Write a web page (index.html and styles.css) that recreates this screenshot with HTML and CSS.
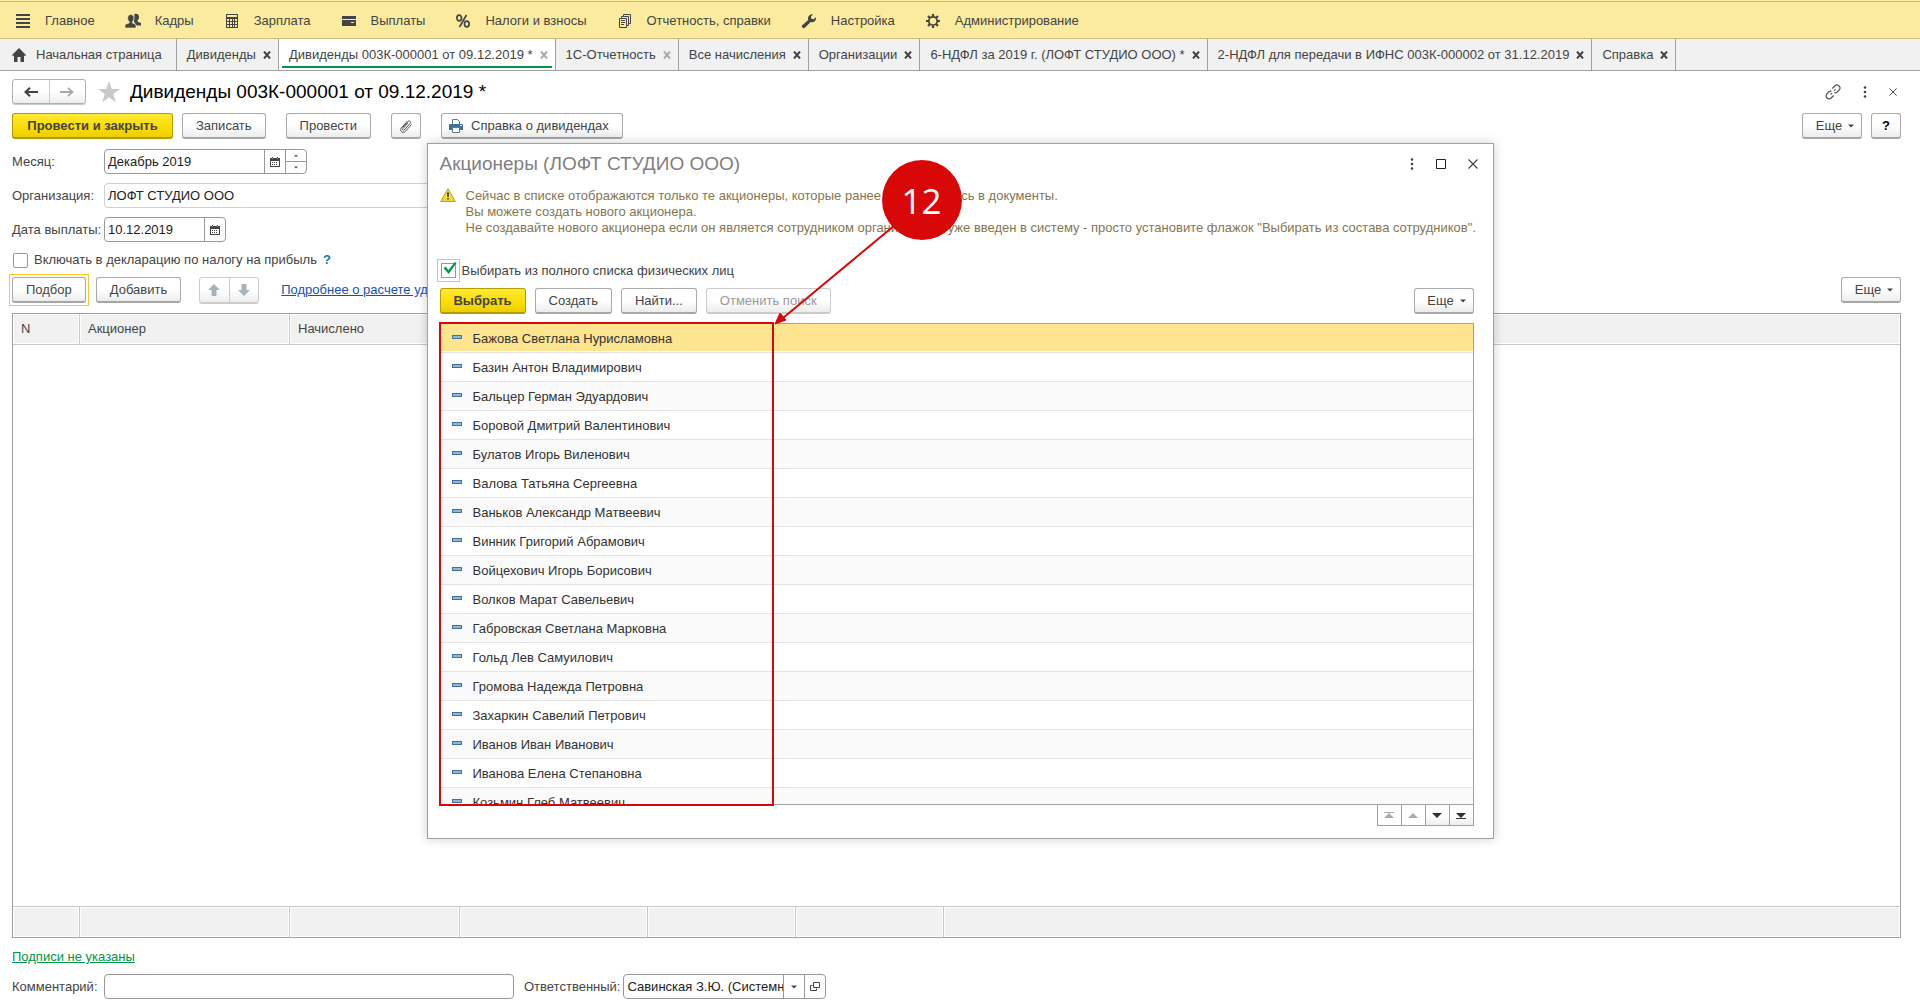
FILE: index.html
```html
<!DOCTYPE html>
<html lang="ru">
<head>
<meta charset="utf-8">
<meta name="viewport" content="width=device-width, initial-scale=1">
<title>Дивиденды 003К-000001 от 09.12.2019 *</title>
<link rel="stylesheet" href="styles.css">
</head>
<body>
<svg class="defs" aria-hidden="true">
  <symbol id="i-close" viewBox="0 0 8 8"><path d="M1 .5l6 7M7 .5l-6 7" fill="none" stroke="currentColor" stroke-width="2"/></symbol>
  <symbol id="i-thin" viewBox="0 0 10 10"><path d="M.5.5l9 9M9.500 .5l-9 9" fill="none" stroke="currentColor" stroke-width="1.200"/></symbol>
  <symbol id="i-dots" viewBox="0 0 4 12"><circle cx="2" cy="1.500" r="1.300" fill="currentColor"/><circle cx="2" cy="6" r="1.300" fill="currentColor"/><circle cx="2" cy="10.500" r="1.300" fill="currentColor"/></symbol>
  <symbol id="i-down" viewBox="0 0 6 4"><path d="M0 .5h6l-3 3z" fill="currentColor"/></symbol>
  <symbol id="i-up" viewBox="0 0 6 4"><path d="M0 3.500h6l-3-3z" fill="currentColor"/></symbol>
  <symbol id="i-cal" viewBox="0 0 10 10"><path d="M0 1h10v9H0z" fill="#444"/><path d="M1 4h8v5H1z" fill="#fff"/><path d="M2 0h1v2H2zM7 0h1v2H7z" fill="#444"/><path d="M2 1h1v1H2zM7 1h1v1H7z" fill="#999"/><path d="M2 5h1v1H2zM4 5h1v1H4zM6 5h1v1H6zM2 7h1v1H2zM4 7h1v1H4zM6 7h1v1H6z" fill="#444"/></symbol>
</svg>

<nav class="menu" aria-label="Разделы">
  <a href="#"><svg class="ico" viewBox="0 0 16 16"><path d="M1 2h14M1 6h14M1 10h14M1 14h14" stroke="#444" stroke-width="2"/></svg>Главное</a>
  <a href="#"><svg class="ico" viewBox="0 0 16 16"><path d="M9.500 1c2-.9 4.500.2 4.500 2.800 0 1.600-.6 2.900-1.400 3.600v1.300L16 10v2.500h-4.500L9 9z" fill="#444"/><path d="M2.700 5C2.700 2.800 4 1.500 5.800 1.500S9 2.800 9 5c0 1.700-.7 3-1.600 3.700v1.200l3.600 1.600v3.500H0v-3.500l4.200-1.600V8.700C3.300 8 2.700 6.700 2.700 5z" fill="#444" stroke="#fbeb9e" stroke-width=".7"/></svg>Кадры</a>
  <a href="#"><svg class="ico" viewBox="0 0 16 16"><path d="M2 1h12v14H2z" fill="#444"/><path d="M3 2h10v2H3zM3 6h2v2H3zM6 6h2v2H6zM9 6h1v2H9zM11 6h2v2h-2zM3 9h2v2H3zM6 9h2v2H6zM9 9h1v2H9zM11 9h2v2h-2zM3 12h2v2H3zM6 12h2v2H6zM9 12h1v2H9zM11 12h2v2h-2z" fill="#fbeb9e"/></svg>Зарплата</a>
  <a href="#"><svg class="ico" viewBox="0 0 16 16"><path d="M1 3h14v3H1zM1 7h14v6H1z" fill="#444"/><path d="M10 9h3v1h-3z" fill="#fbeb9e"/></svg>Выплаты</a>
  <a href="#"><svg class="ico" viewBox="0 0 16 16"><g fill="none" stroke="#444" stroke-width="1.700"><ellipse cx="4.200" cy="5" rx="2.300" ry="2.900"/><ellipse cx="11.800" cy="11" rx="2.300" ry="2.900"/><path d="M11.500 2L4.500 14"/></g></svg>Налоги и взносы</a>
  <a href="#"><svg class="ico" viewBox="0 0 16 16"><path d="M2.500 5.500h7v9h-7zM4.500 5V3.500h7v9H10M6.500 3V1.500h7v9H12" fill="none" stroke="#444"/><path d="M4 7.500h4M4 9.500h4M4 11.500h3" stroke="#444"/></svg>Отчетность, справки</a>
  <a href="#"><svg class="ico" viewBox="0 0 16 16"><path d="M1 12.600L7.200 7C6.400 4 8.300 1.200 12 1.300L9.900 3.800l.5 1.900 2 .6L15 4.200c.5 3.300-2 5.600-5.300 4.900L3.600 15c-1.600.8-3.400-.9-2.600-2.400z" fill="#444"/></svg>Настройка</a>
  <a href="#"><svg class="ico" viewBox="0 0 16 16"><circle cx="8" cy="8" r="4.200" fill="none" stroke="#444" stroke-width="1.800"/><path d="M8 1v2.500M8 12.500V15M1 8h2.500M12.500 8H15M3 3l2 2M11 11l2 2M13 3l-2 2M5 11l-2 2" stroke="#444" stroke-width="2.200"/></svg>Администрирование</a>
</nav>

<div class="tabs">
  <div class="tab home"><svg class="house" viewBox="0 0 14 14"><path d="M7 0l7 7-1 1.200L12 7.300V14H8.500V9h-3v5H2V7.300L1 8.200 0 7z" fill="#444"/></svg><a href="#">Начальная страница</a></div>
  <div class="tab"><a href="#">Дивиденды</a><button class="x" aria-label="Закрыть"><svg><use href="#i-close"/></svg></button></div>
  <div class="tab active"><a href="#">Дивиденды 003К-000001 от 09.12.2019 *</a><button class="x dim" aria-label="Закрыть"><svg><use href="#i-close"/></svg></button></div>
  <div class="tab"><a href="#">1С-Отчетность</a><button class="x dim" aria-label="Закрыть"><svg><use href="#i-close"/></svg></button></div>
  <div class="tab"><a href="#">Все начисления</a><button class="x" aria-label="Закрыть"><svg><use href="#i-close"/></svg></button></div>
  <div class="tab"><a href="#">Организации</a><button class="x" aria-label="Закрыть"><svg><use href="#i-close"/></svg></button></div>
  <div class="tab"><a href="#">6-НДФЛ за 2019 г. (ЛОФТ СТУДИО ООО) *</a><button class="x" aria-label="Закрыть"><svg><use href="#i-close"/></svg></button></div>
  <div class="tab"><a href="#">2-НДФЛ для передачи в ИФНС 003К-000002 от 31.12.2019</a><button class="x" aria-label="Закрыть"><svg><use href="#i-close"/></svg></button></div>
  <div class="tab"><a href="#">Справка</a><button class="x" aria-label="Закрыть"><svg><use href="#i-close"/></svg></button></div>
</div>

<main>
  <header class="titlebar">
    <div class="pair nav">
      <button aria-label="Назад"><svg width="14" height="10" viewBox="0 0 14 10"><path d="M14 5H2M6 .8L1.500 5 6 9.200" fill="none" stroke="#444" stroke-width="2.200"/></svg></button>
      <button aria-label="Вперед"><svg width="14" height="10" viewBox="0 0 14 10"><path d="M0 5h12M8 .8L12.500 5 8 9.200" fill="none" stroke="#aaa" stroke-width="1.800"/></svg></button>
    </div>
    <svg class="star" viewBox="0 0 22 22"><path d="M11 0l2.700 8H22l-6.700 5 2.600 8.500L11 16.300 4.100 21.500 6.700 13 0 8h8.300z" fill="#c8cacc"/></svg>
    <h1>Дивиденды 003К-000001 от 09.12.2019 *</h1>
    <div class="wintools">
      <button class="bare" aria-label="Ссылка"><svg width="16" height="16" viewBox="0 0 16 16"><g transform="rotate(-45 8 8)" fill="none" stroke="#555" stroke-width="1.200"><path d="M6 11H2.500a3 3 0 0 1 0-6H5a3 3 0 0 1 2.500 1.500"/><path d="M10 5h3.500a3 3 0 0 1 0 6H11a3 3 0 0 1-2.500-1.500"/><path d="M4.500 8h2M9.500 8h2"/></g></svg></button>
      <button class="bare" aria-label="Меню"><svg width="4" height="12"><use href="#i-dots"/></svg></button>
      <button class="bare" aria-label="Закрыть"><svg width="8" height="8"><use href="#i-thin"/></svg></button>
    </div>
  </header>

  <div class="toolbar">
    <button class="btn primary w161">Провести и закрыть</button>
    <button class="btn">Записать</button>
    <button class="btn apart">Провести</button>
    <button class="btn square apart" aria-label="Файлы"><svg width="14" height="16" viewBox="0 0 14 16"><path d="M3.500 9.500l5.500-6c1.500-1.500 3.500.3 2.200 1.900l-6 6.600c-.9.9-2.200-.2-1.400-1.200L9 5M12.500 6.500l-6 6.800c-2.600 2.800-6.500-.4-4.200-3.300l5.900-6.800" fill="none" stroke="#555" stroke-width="1"/></svg></button>
    <button class="btn print apart"><svg width="14" height="14" viewBox="0 0 14 14"><path d="M3.500.5h5l2 2V6h-7z" fill="#fff" stroke="#5b7c99"/><path d="M1 5h12a1 1 0 0 1 1 1v5H0V6a1 1 0 0 1 1-1z" fill="#3f6e9a"/><path d="M3.500 8.500h7v5h-7z" fill="#fff" stroke="#5b7c99"/><path d="M11 6h2v1h-2z" fill="#fff"/></svg>Справка о дивидендах</button>
    <button class="btn more push">Еще <svg width="6" height="4"><use href="#i-down"/></svg></button>
    <button class="btn square help">?</button>
  </div>

  <form class="form" onsubmit="return false">
    <label for="month">Месяц:</label>
    <div class="field month"><input id="month" type="text" value="Декабрь 2019"><button aria-label="Календарь"><svg width="10" height="10"><use href="#i-cal"/></svg></button><div class="spin"><button aria-label="Больше"><svg width="4" height="3"><use href="#i-up"/></svg></button><button aria-label="Меньше"><svg width="4" height="3"><use href="#i-down"/></svg></button></div></div>
    <label for="org">Организация:</label>
    <div class="field pale org"><input id="org" type="text" value="ЛОФТ СТУДИО ООО"></div>
    <label for="date">Дата выплаты:</label>
    <div class="field date"><input id="date" type="text" value="10.12.2019"><button aria-label="Календарь"><svg width="10" height="10"><use href="#i-cal"/></svg></button></div>
  </form>
  <div class="check"><input type="checkbox" id="incl"><label for="incl">Включать в декларацию по налогу на прибыль</label><a class="hint" href="#">?</a></div>

  <div class="toolbar second">
    <button class="btn focus">Подбор</button>
    <button class="btn">Добавить</button>
    <div class="pair moves apart">
      <button aria-label="Вверх" disabled><svg width="12" height="12" viewBox="0 0 12 12"><path d="M6 0l6 6H8.500v6h-5V6H0z" fill="#a9b4ba"/></svg></button>
      <button aria-label="Вниз" disabled><svg width="12" height="12" viewBox="0 0 12 12"><path d="M6 12L0 6h3.500V0h5v6H12z" fill="#a9b4ba"/></svg></button>
    </div>
    <a class="info" href="#">Подробнее о расчете удержаний</a>
    <button class="btn more push">Еще <svg width="6" height="4"><use href="#i-down"/></svg></button>
  </div>

  <div class="grid">
    <table>
      <colgroup><col class="c1"><col class="c2"><col class="c3"><col class="c4"><col class="c5"><col class="c5"><col></colgroup>
      <thead><tr><th>N</th><th>Акционер</th><th>Начислено</th><th class="open" colspan="4"></th></tr></thead>
      <tbody><tr><td colspan="7"></td></tr></tbody>
      <tfoot><tr><td></td><td></td><td></td><td></td><td></td><td></td><td class="open"></td></tr></tfoot>
    </table>
  </div>

  <a class="sign" href="#">Подписи не указаны</a>
  <div class="bottom">
    <label class="key" for="note">Комментарий:</label>
    <div class="field note"><input id="note" type="text"></div>
    <label for="resp">Ответственный:</label>
    <div class="field resp"><input id="resp" type="text" value="Савинская З.Ю. (Системный программист)"><button aria-label="Выбрать"><svg width="6" height="4"><use href="#i-down"/></svg></button><button aria-label="Открыть"><svg width="10" height="10" viewBox="0 0 10 10"><path d="M3.500.5h6v5h-6zM2.500 3.500h-2v5h6v-2" fill="none" stroke="#444"/></svg></button></div>
  </div>
</main>

<div class="overlay">
  <section class="dialog" role="dialog" aria-labelledby="dt">
    <header class="dhead">
      <h2 id="dt">Акционеры (ЛОФТ СТУДИО ООО)</h2>
      <div class="dtools">
        <button class="bare" aria-label="Меню"><svg width="4" height="12"><use href="#i-dots"/></svg></button>
        <button class="bare" aria-label="Развернуть"><svg width="10" height="10" viewBox="0 0 10 10"><path d="M.5.500h9v9h-9z" fill="none" stroke="#222" stroke-width="1"/></svg></button>
        <button class="bare" aria-label="Закрыть"><svg width="10" height="10"><use href="#i-thin"/></svg></button>
      </div>
    </header>
    <div class="warn">
      <svg width="16" height="14" viewBox="0 0 16 14"><path d="M8 .7L15.300 13.400H.7z" fill="#f7d93c" stroke="#b59b35" stroke-linejoin="round"/><path d="M7 4.500h2l-.4 4.500H7.400zM7.200 10h1.600v1.600H7.200z" fill="#333"/></svg>
      <p>Сейчас в списке отображаются только те акционеры, которые ранее уже вводились в документы.<br>Вы можете создать нового акционера.<br>Не создавайте нового акционера если он является сотрудником организации и уже введен в систему - просто установите флажок "Выбирать из состава сотрудников".</p>
    </div>
    <div class="dcheck"><input type="checkbox" id="full" checked><label for="full">Выбирать из полного списка физических лиц</label></div>
    <div class="toolbar">
      <button class="btn primary w86">Выбрать</button>
      <button class="btn">Создать</button>
      <button class="btn">Найти...</button>
      <button class="btn" disabled>Отменить поиск</button>
      <button class="btn more push">Еще <svg width="6" height="4"><use href="#i-down"/></svg></button>
    </div>
    <div class="listbox">
      <div class="list">
        <table>
          <tbody>
            <tr class="sel"><td><i></i>Бажова Светлана Нурисламовна</td><td></td></tr>
            <tr><td><i></i>Базин Антон Владимирович</td><td></td></tr>
            <tr><td><i></i>Бальцер Герман Эдуардович</td><td></td></tr>
            <tr><td><i></i>Боровой Дмитрий Валентинович</td><td></td></tr>
            <tr><td><i></i>Булатов Игорь Виленович</td><td></td></tr>
            <tr><td><i></i>Валова Татьяна Сергеевна</td><td></td></tr>
            <tr><td><i></i>Ваньков Александр Матвеевич</td><td></td></tr>
            <tr><td><i></i>Винник Григорий Абрамович</td><td></td></tr>
            <tr><td><i></i>Войцехович Игорь Борисович</td><td></td></tr>
            <tr><td><i></i>Волков Марат Савельевич</td><td></td></tr>
            <tr><td><i></i>Габровская Светлана Марковна</td><td></td></tr>
            <tr><td><i></i>Гольд Лев Самуилович</td><td></td></tr>
            <tr><td><i></i>Громова Надежда Петровна</td><td></td></tr>
            <tr><td><i></i>Захаркин Савелий Петрович</td><td></td></tr>
            <tr><td><i></i>Иванов Иван Иванович</td><td></td></tr>
            <tr><td><i></i>Иванова Елена Степановна</td><td></td></tr>
            <tr><td><i></i>Козьмин Глеб Матвеевич</td><td></td></tr>
          </tbody>
        </table>
      </div>
      <div class="frame"></div>
    </div>
    <div class="pager">
      <button disabled aria-label="В начало"><svg width="10" height="7" viewBox="0 0 10 7"><path d="M0 0h10v1H0zM5 1l5 5H0z" fill="#aaa"/></svg></button>
      <button disabled aria-label="Назад"><svg width="10" height="7" viewBox="0 0 10 7"><path d="M5 1l5 5H0z" fill="#aaa"/></svg></button>
      <button aria-label="Вперед"><svg width="10" height="7" viewBox="0 0 10 7"><path d="M5 6L0 1h10z" fill="#333"/></svg></button>
      <button aria-label="В конец"><svg width="10" height="7" viewBox="0 0 10 7"><path d="M0 6h10v1H0zM5 6L0 1h10z" fill="#333"/></svg></button>
    </div>
    <svg class="arrow" viewBox="0 0 124 102"><path d="M120 2L8 95" stroke="#d80808" stroke-width="2"/><path d="M0 101l5-11 6 7z" fill="#d80808" stroke="#d80808" stroke-width="1"/></svg>
    <div class="badge">12</div>
  </section>
</div>
</body>
</html>
```
FILE: styles.css
```css
* { box-sizing: border-box; }

body {
  margin: 0;
  height: 100vh;
  min-height: 760px;
  display: flex;
  flex-direction: column;
  position: relative;
  background: #fff;
  color: #444;
  font: 13px/16px "Liberation Sans", Arial, sans-serif;
}

button, input { font: inherit; color: inherit; margin: 0; }
button { padding: 0; display: flex; align-items: center; justify-content: center; flex: none; }
svg { flex: none; display: block; }
a { color: inherit; text-decoration: none; }
h1, h2, p { margin: 0; font-weight: normal; }
.defs { position: absolute; width: 0; height: 0; }
.bare { border: 0; background: none; color: #444; }

/* Sections menu */
.menu {
  display: flex;
  gap: 30px;
  height: 39px;
  flex: none;
  padding: 0 15px;
  background: #fbeb9e;
  border-bottom: 1px solid #cbbd73;
  box-shadow: inset 0 1px #fbeb9e, inset 0 2px #cbbd73;
}
.menu a { display: flex; align-items: center; gap: 14px; padding-top: 3px; white-space: nowrap; }
.ico { width: 16px; height: 16px; }

/* Open windows */
.tabs { display: flex; height: 32px; flex: none; background: #f1f1f1; border-bottom: 1px solid #a0a0a0; }
.tab {
  display: flex;
  align-items: center;
  gap: 7px;
  padding: 0 7px 0 10px;
  border-right: 1px solid #a0a0a0;
  white-space: nowrap;
}
.tab.home { padding: 0 14px 0 12px; gap: 10px; }
.tab.active { background: linear-gradient(#009646, #009646) center bottom 2px / calc(100% - 6px) 2px no-repeat #fff; }
.house { width: 14px; height: 14px; }
.x { width: 8px; height: 8px; border: 0; background: none; color: #444; }
.x svg { width: 8px; height: 8px; }
.x.dim { color: #aaa; }

/* Document */
main { flex: 1; min-height: 0; display: flex; flex-direction: column; padding: 8px 19px 3px 12px; }
.titlebar { display: flex; align-items: center; height: 25px; flex: none; }
.star { width: 22px; height: 22px; margin: 0 10px 0 12px; }
h1 { font-size: 19px; line-height: 24px; color: #000; }
.wintools { margin-left: auto; display: flex; align-items: center; gap: 22px; padding-right: 4px; }

.pair { display: flex; height: 25px; border: 1px solid #b0b0b0; border-radius: 3px; box-shadow: 0 1px #ccc; background: linear-gradient(#fff 50%, #ededed); }
.pair button { flex: 1; border: 0; background: none; }
.pair button + button { border-left: 1px solid #ccc; }
.nav { width: 74px; }
.moves { width: 60px; height: 26px; border-color: #ccc; }

.toolbar { display: flex; gap: 9px; height: 26px; flex: none; margin-top: 9px; }
.btn {
  height: 26px;
  padding: 1px 13px 0;
  border: 1px solid #aaa;
  border-bottom: 2px solid #a6a6a6;
  border-radius: 3px;
  background: linear-gradient(#fff 50%, #ececec);
  white-space: nowrap;
}
.btn.primary { font-weight: bold; border-color: #b39d00; background: linear-gradient(#ffe936, #fbdc00 60%, #ecce00); }
.btn:disabled { color: #999; border-color: #ccc; }
.w161 { width: 161px; }
.w86 { width: 86px; }
.btn.square { width: 30px; padding: 0; }
.btn.help { font-weight: bold; color: #000; }
.btn.print { gap: 8px; padding: 1px 13px 0 7px; }
.btn.more { width: 60px; padding: 1px 6px 0 12px; gap: 6px; }
.apart { margin-left: 11px; }
.toolbar .push { margin-left: auto; }
.focus { position: relative; }
.focus::after { content: ""; position: absolute; inset: -4px -4px -5px; border: 1px solid #f7c92f; }

.form { display: grid; grid-template-columns: 92px 1fr; row-gap: 9px; align-items: center; margin: 10px 0 0; flex: none; }
.field { display: flex; height: 25px; border: 1px solid #999; border-radius: 4px; background: #fff; overflow: hidden; }
.field.pale { border-color: #d0d0d0; }
.field input { flex: 1; min-width: 0; width: 0; border: 0; padding: 0 0 0 3px; background: none; color: #222; }
.field > button { width: 21px; border: 0; border-left: 1px solid #999; background: none; color: #444; }
.month { width: 203px; }
.org { width: 420px; }
.date { width: 122px; }
.note { width: 410px; margin-right: 10px; }
.resp { width: 203px; }
.spin { display: flex; flex-direction: column; width: 21px; border-left: 1px solid #999; }
.spin button { flex: 1; border: 0; background: none; }
.spin button + button { border-top: 1px solid #999; }

input[type="checkbox"] { appearance: none; width: 15px; height: 15px; border: 1px solid #999; border-radius: 2px; background: #fff; flex: none; }
.check { display: flex; align-items: center; gap: 6px; height: 16px; flex: none; margin-top: 10px; padding-left: 1px; }
.hint { color: #0a78be; font-weight: bold; }
.second { margin-top: 9px; gap: 10px; }
.second .apart { margin-left: 8px; }
.info { align-self: center; margin-left: 12px; color: #1a4fb8; text-decoration: underline; }

.grid { flex: 1; min-height: 0; margin-top: 10px; border: 1px solid #a0a0a0; }
table { width: 100%; border-collapse: separate; border-spacing: 0; table-layout: fixed; }
.grid table { height: 100%; }
.grid th, .grid tfoot td {
  height: 31px;
  padding: 0 8px;
  text-align: left;
  font-weight: normal;
  background: #f1f1f1;
  box-shadow: inset 0 0 0 1px #fff;
  border-right: 1px solid #c8c8c8;
}
.grid th { border-bottom: 1px solid #c8c8c8; }
.grid tfoot td { border-top: 1px solid #c8c8c8; }
.grid .open { border-right: 0; }
.c1 { width: 67px; }
.c2 { width: 210px; }
.c3 { width: 170px; }
.c4 { width: 188px; }
.c5 { width: 148px; }

.sign { align-self: flex-start; margin-top: 11px; color: #009646; text-decoration: underline; }
.bottom { display: flex; align-items: center; flex: none; margin-top: 9px; }
.bottom .key { width: 92px; }
.bottom .resp { margin-left: 3px; }

/* Shareholder picker */
.overlay { position: absolute; inset: 0; display: flex; justify-content: center; padding: 143px 0 163px; pointer-events: none; }
.dialog {
  pointer-events: auto;
  position: relative;
  display: flex;
  flex-direction: column;
  width: 1067px;
  max-width: 100%;
  padding: 8px 19px 12px 12px;
  background: #fff;
  border: 1px solid #a0a0a0;
  box-shadow: 0 0 10px rgba(0, 0, 0, .2);
}
.dhead { display: flex; align-items: center; height: 24px; flex: none; margin-right: -4px; }
h2 { font-size: 19px; line-height: 24px; color: #808080; }
.dtools { margin-left: auto; display: flex; align-items: center; gap: 22px; }
.warn { display: flex; gap: 10px; margin-top: 12px; color: #857650; white-space: nowrap; flex: none; }
.dcheck { display: flex; align-items: center; gap: 6px; height: 24px; flex: none; margin-top: 22px; padding: 1px 0 0 1px; }
.dcheck input[type="checkbox"] { position: relative; border-radius: 0; outline: 1px solid #f7c92f; outline-offset: 3px; }
.dcheck input:checked::after {
  content: "";
  position: absolute;
  left: 2px;
  top: -2px;
  width: 13px;
  height: 12px;
  background: #009646;
  clip-path: polygon(0 50%, 18% 40%, 38% 68%, 86% 0, 100% 8%, 40% 100%);
}
.dialog .toolbar { margin-top: 6px; }
.listbox { position: relative; flex: 1; min-height: 0; margin-top: 9px; }
.list { height: 100%; overflow: hidden; border: 1px solid #a0a0a0; }
.list td { height: 29px; padding: 2px 0 0 11px; border-bottom: 1px solid #e4e4e4; color: #333; white-space: nowrap; }
.list td:first-child { width: 333px; }
.list tr:nth-child(odd) { background: #fafafa; }
.list tr.sel { background: #fde48f; }
.list .sel td { box-shadow: inset 0 -1px #fff; }
.list i { display: inline-block; width: 10px; height: 4px; margin-right: 11px; vertical-align: 4px; border: 1px solid #41729c; background: #8fb8d8; }
.frame { position: absolute; left: -1px; top: -1px; bottom: -1px; width: 335px; border: 2px solid #d80808; }
.pager { display: flex; justify-content: flex-end; flex: none; }
.pager button { width: 25px; height: 21px; border: 1px solid #a0a0a0; border-top: 0; background: linear-gradient(#fff 50%, #eee); }
.pager button:disabled { background: #fff; }
.pager button + button { margin-left: -1px; }
.arrow { position: absolute; left: 347px; top: 79px; width: 124px; height: 102px; }
.badge {
  position: absolute;
  left: 454px;
  top: 16px;
  width: 80px;
  height: 80px;
  border-radius: 50%;
  background: #d80808;
  color: #fff;
  font: 35px/82px "Open Sans", "Noto Sans", sans-serif;
  text-align: center;
}
```
